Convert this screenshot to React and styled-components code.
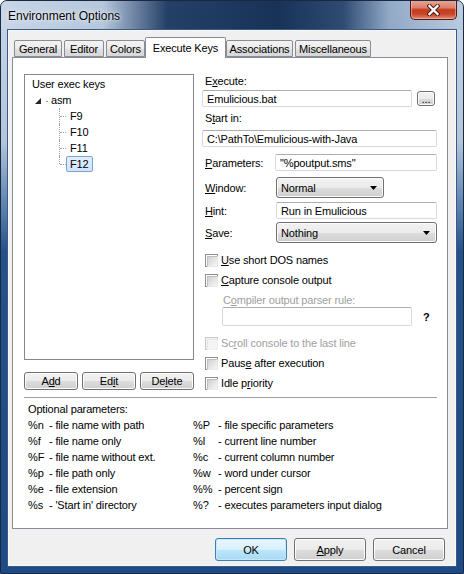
import React from 'react';
import styled, { createGlobalStyle } from 'styled-components';

const Global = createGlobalStyle`
  html, body { margin: 0; padding: 0; background: #fff; }
  body { width: 464px; height: 574px; overflow: hidden; font-family: "Liberation Sans", Arial, sans-serif; }
  * { box-sizing: border-box; }
`;

const FONT = `font-family: "Liberation Sans", Arial, sans-serif; font-size: 11px; letter-spacing: -0.15px;`;

const Window = styled.div`
  width: 464px;
  height: 574px;
  border: 1px solid #1a2940;
  border-radius: 7px 7px 0 0;
  background: linear-gradient(180deg, #c8d6e7 0px, #b3c5da 140px, #5c82b0 205px, #25518a 250px, #1e4b85 100%);
  display: flex;
  flex-direction: column;
  overflow: hidden;
`;

const TitleBar = styled.div`
  height: 29px;
  flex: none;
  display: flex;
  align-items: flex-start;
  padding-left: 7px;
  padding-right: 6px;
  background: linear-gradient(90deg, rgba(200,214,231,0.9) 0%, rgba(170,190,214,0.6) 22%, rgba(28,56,96,0.95) 36%, rgba(24,50,88,1) 60%, rgba(30,60,102,0.9) 74%, rgba(110,140,178,0.6) 84%, rgba(160,182,210,0.3) 100%);
  border-radius: 6px 6px 0 0;
`;

const TitleText = styled.div`
  font-family: "Liberation Sans", Arial, sans-serif;
  font-size: 12px;
  color: #000;
  line-height: 14px;
  margin-top: 8px;
  text-shadow: 0 0 6px rgba(255,255,255,0.9), 0 0 2px rgba(255,255,255,0.8);
`;

const CloseButton = styled.div`
  margin-left: auto;
  width: 47px;
  height: 20px;
  margin-top: -1px;
  border: 1px solid #4a1b12;
  border-top: none;
  border-radius: 0 0 5px 5px;
  background: linear-gradient(180deg, #e9a897 0%, #dc806b 40%, #c43a1e 52%, #c9472b 75%, #e28d77 100%);
  box-shadow: inset 0 0 0 1px rgba(255,200,190,0.5);
  display: flex;
  align-items: center;
  justify-content: center;
`;

const Client = styled.div`
  flex: 1;
  margin: 0 7px 7px 7px;
  background: #f0f0f0;
  border: 1px solid #f4f7fb;
  box-shadow: 0 0 0 1px #3d5a82;
  padding: 6px 7px 0 3px;
`;

const TabStrip = styled.div`
  height: 20px;
  display: flex;
  align-items: flex-end;
  gap: 2px;
  padding-left: 2px;
`;

const Tab = styled.div`
  ${FONT}
  width: ${p => p.$w}px;
  height: ${p => (p.$active ? 21 : 17)}px;
  margin: ${p => (p.$active ? '0 -2px -1px -2px' : '0')};
  position: relative;
  z-index: ${p => (p.$active ? 2 : 0)};
  border: 1px solid #898c95;
  border-bottom: ${p => (p.$active ? 'none' : '1px solid #898c95')};
  border-radius: 2px 2px 0 0;
  background: ${p => (p.$active ? '#fff' : 'linear-gradient(180deg, #f3f3f3 0%, #ebebeb 50%, #dfdfdf 51%, #d8d8d8 100%)')};
  color: #000;
  display: flex;
  justify-content: center;
  align-items: ${p => (p.$active ? 'flex-start' : 'center')};
  padding-top: ${p => (p.$active ? '3px' : '0')};
  line-height: 14px;
`;

const Panel = styled.div`
  height: 472px;
  border: 1px solid #898c95;
  background: #fff;
  padding: 16px 10px 0 11px;
  display: grid;
  grid-template-columns: 170px 235px;
  column-gap: 8px;
  align-content: start;
`;

const LeftCol = styled.div`
  display: flex;
  flex-direction: column;
`;

const TreeBox = styled.div`
  height: 286px;
  border: 1px solid #828790;
  background: #fff;
  padding-top: 1px;
  ${FONT}
  color: #000;
`;

const TreeRoot = styled.div`
  height: 16px;
  line-height: 16px;
  padding-left: 7px;
`;

const TreeNode = styled.div`
  height: 16px;
  line-height: 16px;
  display: flex;
  align-items: center;
  padding-left: 10px;
`;

const Expander = styled.svg`
  width: 6px;
  height: 6px;
  margin-right: 5px;
  margin-top: 1px;
`;

const Stub = styled.span`
  width: 2px;
  height: 1px;
  background: #9a9a9a;
  margin-right: 3px;
  margin-top: 2px;
`;

const ChildList = styled.ul`
  margin: 0;
  padding: 0;
  list-style: none;
`;

const Child = styled.li`
  position: relative;
  height: 16px;
  padding-left: 41px;
  &::before {
    content: '';
    position: absolute;
    left: 34px;
    top: 0;
    height: ${p => (p.$last ? '8px' : '16px')};
    border-left: 1px dotted #a0a0a0;
  }
  &::after {
    content: '';
    position: absolute;
    left: 35px;
    top: 8px;
    width: 6px;
    border-top: 1px dotted #a0a0a0;
  }
`;

const NodeLabel = styled.span`
  display: inline-block;
  height: 16px;
  line-height: 14px;
  padding: 0 3px;
  border: 1px solid ${p => (p.$selected ? '#7da2ce' : 'transparent')};
  border-radius: 2px;
  background: ${p => (p.$selected ? 'linear-gradient(180deg, #e4effd 0%, #cfe3fc 100%)' : 'transparent')};
`;

const ButtonRow = styled.div`
  display: flex;
  gap: 4px;
  margin-top: 12px;
`;

const Button = styled.button`
  ${FONT}
  color: #000;
  height: ${p => p.$h || 18}px;
  width: ${p => (p.$w ? `${p.$w}px` : 'auto')};
  flex: ${p => (p.$w ? 'none' : '1')};
  padding: 0;
  border: 1px solid ${p => (p.$default ? '#3c7fb1' : '#707070')};
  border-radius: 3px;
  background: ${p =>
    p.$default
      ? 'linear-gradient(180deg, #eaf6fd 0%, #d9f0fc 50%, #bee6fd 51%, #a7d9f5 100%)'
      : 'linear-gradient(180deg, #f2f2f2 0%, #ebebeb 50%, #dddddd 51%, #cfcfcf 100%)'};
  box-shadow: inset 0 0 0 1px ${p => (p.$default ? '#c6e7f8' : '#fcfcfc')};
  display: flex;
  align-items: center;
  justify-content: center;
  line-height: 12px;
`;

const RightCol = styled.div`
  display: flex;
  flex-direction: column;
  ${FONT}
  color: #000;
`;

const Label = styled.div`
  height: 14px;
  line-height: 14px;
  padding-left: ${p => p.$indent || 3}px;
  margin-top: ${p => p.$mt || 0}px;
  color: ${p => (p.$disabled ? '#a0a0a0' : '#000')};
`;

const U = styled.span`
  text-decoration: underline;
`;

const Row = styled.div`
  display: flex;
  align-items: center;
  margin-top: ${p => p.$mt || 0}px;
  padding-left: ${p => p.$indent || 0}px;
  height: ${p => p.$h || 17}px;
`;

const RowLabel = styled.div`
  width: ${p => p.$w || 73}px;
  flex: none;
  padding-left: 3px;
  line-height: 14px;
`;

const TextField = styled.input`
  ${FONT}
  color: #000;
  height: ${p => p.$h || 17}px;
  width: ${p => (p.$w ? `${p.$w}px` : '100%')};
  flex: ${p => (p.$w ? 'none' : '1')};
  min-width: 0;
  margin: 0;
  padding: 0 4px;
  border: 1px solid #d6dae0;
  border-top-color: #abadb3;
  border-radius: 2px;
  background: #fff;
  outline: none;
`;

const Select = styled.div`
  width: ${p => (p.$w ? `${p.$w}px` : 'auto')};
  flex: ${p => (p.$w ? 'none' : '1')};
  height: 21px;
  border: 1px solid #707070;
  border-radius: 3px;
  background: linear-gradient(180deg, #f2f2f2 0%, #ebebeb 50%, #dddddd 51%, #cfcfcf 100%);
  box-shadow: inset 0 0 0 1px #fbfbfb;
  display: flex;
  align-items: center;
  padding: 0 6px 0 4px;
  line-height: 14px;
`;

const SelectValue = styled.span`
  flex: 1;
`;

const CheckRow = styled.div`
  height: 20px;
  display: flex;
  align-items: center;
  padding-left: 3px;
  margin-top: ${p => p.$mt || 0}px;
  color: ${p => (p.$disabled ? '#a0a0a0' : '#000')};
`;

const CheckBox = styled.span`
  width: 13px;
  height: 13px;
  flex: none;
  margin-right: 3px;
  border: 1px solid ${p => (p.$disabled ? '#c8c8c8' : '#8e8f8f')};
  background: ${p => (p.$disabled ? '#f4f4f4' : '#fff')};
  padding: 1px;
  &::before {
    content: '';
    display: block;
    width: 100%;
    height: 100%;
    border: 1px solid ${p => (p.$disabled ? '#e6e6e6' : '#c0c0c0')};
    border-right-color: ${p => (p.$disabled ? '#f0f0f0' : '#e8e8e8')};
    border-bottom-color: ${p => (p.$disabled ? '#f0f0f0' : '#e8e8e8')};
    background: ${p => (p.$disabled ? '#f4f4f4' : 'linear-gradient(135deg, #d0d0d0 0%, #e8e8e8 60%, #f6f6f6 100%)')};
  }
`;

const Help = styled.span`
  font-weight: bold;
  margin-left: 11px;
  font-size: 11px;
`;

const Separator = styled.div`
  grid-column: 1 / -1;
  height: 1px;
  background: #a0a0a0;
  margin-top: 4px;
`;

const Params = styled.div`
  grid-column: 1 / -1;
  margin-top: 3px;
  padding-left: 4px;
  ${FONT}
  color: #000;
`;

const ParamsTitle = styled.div`
  height: 16px;
  line-height: 16px;
`;

const ParamsGrid = styled.div`
  display: grid;
  grid-template-columns: 165px 1fr;
  grid-auto-rows: 16px;
`;

const ParamCell = styled.div`
  display: flex;
  line-height: 16px;
  white-space: nowrap;
`;

const Code = styled.span`
  width: ${p => p.$w}px;
  flex: none;
`;

const Footer = styled.div`
  display: flex;
  justify-content: flex-end;
  gap: 7px;
  margin-top: 9px;
  padding-right: 3px;
`;

const params = [
  ['%n', '- file name with path', '%P', '- file specific parameters'],
  ['%f', '- file name only', '%l', '- current line number'],
  ['%F', '- file name without ext.', '%c', '- current column number'],
  ['%p', '- file path only', '%w', '- word under cursor'],
  ['%e', '- file extension', '%%', '- percent sign'],
  ['%s', "- 'Start in' directory", '%?', '- executes parameters input dialog'],
];

const tabs = [
  ['General', 48],
  ['Editor', 40],
  ['Colors', 39],
  ['Execute Keys', 81, true],
  ['Associations', 67],
  ['Miscellaneous', 76],
];

const Arrow = () => (
  <svg width="7" height="4" viewBox="0 0 7 4">
    <path d="M0 0 H7 L3.5 4 Z" fill="#000" />
  </svg>
);

export default function App() {
  return (
    <>
      <Global />
      <Window>
        <TitleBar>
          <TitleText>Environment Options</TitleText>
          <CloseButton>
            <svg width="13" height="12" viewBox="0 0 13 12">
              <path d="M2.5 2 L10.5 10 M10.5 2 L2.5 10" stroke="#4a1a10" strokeWidth="4.2" strokeLinecap="square" />
              <path d="M2.5 2 L10.5 10 M10.5 2 L2.5 10" stroke="#fff" strokeWidth="2.3" strokeLinecap="square" />
            </svg>
          </CloseButton>
        </TitleBar>
        <Client>
          <TabStrip>
            {tabs.map(([name, w, active]) => (
              <Tab key={name} $w={w} $active={active}>{name}</Tab>
            ))}
          </TabStrip>
          <Panel>
            <LeftCol>
              <TreeBox>
                <TreeRoot>User exec keys</TreeRoot>
                <TreeNode>
                  <Expander viewBox="0 0 6 6">
                    <path d="M6 0 V6 H0 Z" fill="#262626" />
                  </Expander>
                  <Stub />
                  asm
                </TreeNode>
                <ChildList>
                  <Child><NodeLabel>F9</NodeLabel></Child>
                  <Child><NodeLabel>F10</NodeLabel></Child>
                  <Child><NodeLabel>F11</NodeLabel></Child>
                  <Child $last><NodeLabel $selected>F12</NodeLabel></Child>
                </ChildList>
              </TreeBox>
              <ButtonRow>
                <Button>A<U>d</U>d</Button>
                <Button>Ed<U>i</U>t</Button>
                <Button>De<U>l</U>ete</Button>
              </ButtonRow>
            </LeftCol>
            <RightCol>
              <Label>E<U>x</U>ecute:</Label>
              <Row $mt={2}>
                <TextField readOnly defaultValue="Emulicious.bat" />
                <Button $w={18} $h={15} style={{ marginLeft: 5, marginRight: 2 }}>...</Button>
              </Row>
              <Label $mt={4}>S<U>t</U>art in:</Label>
              <Row $mt={5}>
                <TextField readOnly defaultValue="C:\PathTo\Emulicious-with-Java" />
              </Row>
              <Row $mt={7}>
                <RowLabel><U>P</U>arameters:</RowLabel>
                <TextField readOnly defaultValue={'"%poutput.sms"'} />
              </Row>
              <Row $mt={6} $h={21}>
                <RowLabel $w={74}><U>W</U>indow:</RowLabel>
                <Select $w={108}>
                  <SelectValue>Normal</SelectValue>
                  <Arrow />
                </Select>
              </Row>
              <Row $mt={4}>
                <RowLabel $w={74}><U>H</U>int:</RowLabel>
                <TextField readOnly defaultValue="Run in Emulicious" />
              </Row>
              <Row $mt={3} $h={21}>
                <RowLabel $w={74}><U>S</U>ave:</RowLabel>
                <Select>
                  <SelectValue>Nothing</SelectValue>
                  <Arrow />
                </Select>
              </Row>
              <CheckRow $mt={7}>
                <CheckBox />
                <span><U>U</U>se short DOS names</span>
              </CheckRow>
              <CheckRow>
                <CheckBox />
                <span><U>C</U>apture console output</span>
              </CheckRow>
              <Label $mt={3} $indent={21} $disabled>C<U>o</U>mpiler output parser rule:</Label>
              <Row $indent={20} $h={19}>
                <TextField readOnly defaultValue="" $w={190} $h={19} />
                <Help>?</Help>
              </Row>
              <CheckRow $mt={7} $disabled>
                <CheckBox $disabled />
                <span>Sc<U>r</U>oll console to the last line</span>
              </CheckRow>
              <CheckRow>
                <CheckBox />
                <span>Paus<U>e</U> after execution</span>
              </CheckRow>
              <CheckRow>
                <CheckBox />
                <span>Idle p<U>r</U>iority</span>
              </CheckRow>
            </RightCol>
            <Separator />
            <Params>
              <ParamsTitle>Optional parameters:</ParamsTitle>
              <ParamsGrid>
                {params.map(([c1, d1, c2, d2]) => (
                  <React.Fragment key={c1}>
                    <ParamCell><Code $w={21}>{c1}</Code>{d1}</ParamCell>
                    <ParamCell><Code $w={25}>{c2}</Code>{d2}</ParamCell>
                  </React.Fragment>
                ))}
              </ParamsGrid>
            </Params>
          </Panel>
          <Footer>
            <Button $w={72} $h={23} $default>OK</Button>
            <Button $w={72} $h={23}><U>A</U>pply</Button>
            <Button $w={72} $h={23}>Cancel</Button>
          </Footer>
        </Client>
      </Window>
    </>
  );
}
